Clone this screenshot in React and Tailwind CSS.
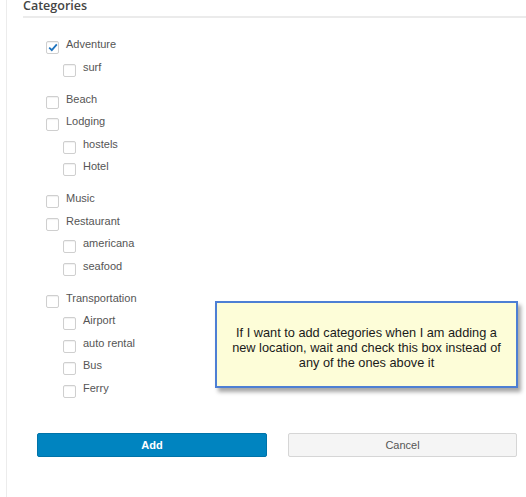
import React from "react";

const sections = [
  [{ label: "Adventure", checked: true, children: ["surf"] }],
  [{ label: "Beach" }, { label: "Lodging", children: ["hostels", "Hotel"] }],
  [{ label: "Music" }, { label: "Restaurant", children: ["americana", "seafood"] }],
  [{ label: "Transportation", children: ["Airport", "auto rental", "Bus", "Ferry"] }],
];

const Box = ({ checked }) => (
  <span className="mt-[8px] flex h-[13px] w-[13px] shrink-0 items-center justify-center rounded-[2px] border border-[#cfcfcf] bg-white shadow-[inset_0_1px_1px_rgba(0,0,0,0.06)]">
    {checked && (
      <svg width="10" height="9" viewBox="0 0 10 9">
        <path d="M1.2 4.6 L3.8 7.2 L8.8 1.4" fill="none" stroke="#1e73be" strokeWidth="1.8" />
      </svg>
    )}
  </span>
);

const Row = ({ label, checked, indent }) => (
  <div className={`flex h-[22.5px] ${indent ? "pl-[62px]" : "pl-[45px]"}`}>
    <Box checked={checked} />
    <span className="ml-[7px] text-[11px] leading-[22.5px] text-[#555]">{label}</span>
  </div>
);

const App = () => {
  return (
    <div className="relative h-[497px] w-[526px] overflow-hidden bg-white font-['Liberation_Sans',Arial,sans-serif]">
      <div className="ml-[6px] h-full border-l border-[#ececec]">
        <div className="ml-[16px] border-b-2 border-[#ebebeb] pb-[4px]">
          <p className="font-['Open_Sans',sans-serif] text-[12.5px] font-semibold leading-[12px] text-[#444]">
            Categories
          </p>
        </div>
        <div className="-ml-[6px] mt-[15px] flex flex-col gap-[9.5px]">
          {sections.map((s, i) => (
            <div key={i}>
              {s.map((g) => (
                <div key={g.label}>
                  <Row label={g.label} checked={g.checked} />
                  {(g.children || []).map((c) => (
                    <Row key={c} label={c} indent />
                  ))}
                </div>
              ))}
            </div>
          ))}
        </div>
        <div className="-ml-[6px] mt-[34px] flex gap-[21px] pl-[36px] pr-[9px]">
          <button className="h-[24px] w-[230px] rounded-[2px] border border-[#0073a8] bg-[#0084c0] text-[11px] font-bold text-white">
            Add
          </button>
          <button className="h-[24px] flex-1 rounded-[2px] border border-[#d6d6d6] bg-[#f5f5f5] text-[11px] text-[#555]">
            Cancel
          </button>
        </div>
      </div>

      <div className="absolute left-[215px] top-[301px] flex h-[87px] w-[303px] items-start justify-center border-2 border-[#4d7fd4] bg-[#fdfdd8] pt-[22px] shadow-[3px_4px_4px_rgba(0,0,0,0.35)]">
        <p className="w-[280px] text-center font-['Liberation_Sans',Arial,sans-serif] text-[12.75px] leading-[15px] text-[#1a1a1a]">
          If I want to add categories when I am adding a new location, wait and check this box instead of any of the ones above it
        </p>
      </div>
    </div>
  );
};

export default App;
